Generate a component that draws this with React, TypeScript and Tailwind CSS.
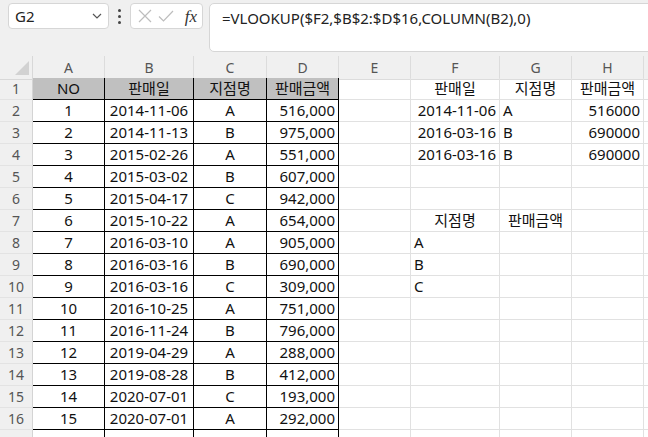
import * as React from 'react';

type Align = 'l' | 'c' | 'r';
type Cell = { v: string; a: Align };

const COLS = ['A', 'B', 'C', 'D', 'E', 'F', 'G', 'H', ''];

const tableRows: string[][] = [
  ['1', '2014-11-06', 'A', '516,000'],
  ['2', '2014-11-13', 'B', '975,000'],
  ['3', '2015-02-26', 'A', '551,000'],
  ['4', '2015-03-02', 'B', '607,000'],
  ['5', '2015-04-17', 'C', '942,000'],
  ['6', '2015-10-22', 'A', '654,000'],
  ['7', '2016-03-10', 'A', '905,000'],
  ['8', '2016-03-16', 'B', '690,000'],
  ['9', '2016-03-16', 'C', '309,000'],
  ['10', '2016-10-25', 'A', '751,000'],
  ['11', '2016-11-24', 'B', '796,000'],
  ['12', '2019-04-29', 'A', '288,000'],
  ['13', '2019-08-28', 'B', '412,000'],
  ['14', '2020-07-01', 'C', '193,000'],
  ['15', '2020-07-01', 'A', '292,000'],
];

// cells outside the bordered table, keyed "row:col"
const extra: Record<string, Cell> = {
  '1:5': { v: '판매일', a: 'c' },
  '1:6': { v: '지점명', a: 'c' },
  '1:7': { v: '판매금액', a: 'c' },
  '2:5': { v: '2014-11-06', a: 'r' },
  '2:6': { v: 'A', a: 'l' },
  '2:7': { v: '516000', a: 'r' },
  '3:5': { v: '2016-03-16', a: 'r' },
  '3:6': { v: 'B', a: 'l' },
  '3:7': { v: '690000', a: 'r' },
  '4:5': { v: '2016-03-16', a: 'r' },
  '4:6': { v: 'B', a: 'l' },
  '4:7': { v: '690000', a: 'r' },
  '7:5': { v: '지점명', a: 'c' },
  '7:6': { v: '판매금액', a: 'c' },
  '8:5': { v: 'A', a: 'l' },
  '9:5': { v: 'B', a: 'l' },
  '10:5': { v: 'C', a: 'l' },
};

const justify = (a: Align) =>
  a === 'c' ? 'justify-center' : a === 'r' ? 'justify-end' : 'justify-start';

const getCell = (r: number, c: number): { cell?: Cell; inTable: boolean; head: boolean } => {
  if (r >= 1 && r <= 16 && c <= 3) {
    if (r === 1) {
      const h = ['NO', '판매일', '지점명', '판매금액'][c];
      return { cell: { v: h, a: 'c' }, inTable: true, head: true };
    }
    const v = tableRows[r - 2][c];
    return { cell: { v, a: c === 3 ? 'r' : 'c' }, inTable: true, head: false };
  }
  return { cell: extra[`${r}:${c}`], inTable: false, head: false };
};

const Toolbar = () => (
  <div className="flex items-start h-[56px] bg-[#f0f0f0] pt-[3px] pl-[8px]">
    {/* Name box */}
    <div className="flex items-center justify-between w-[101px] h-[26px] bg-white border border-[#d6d6d6] rounded-[4px] pl-[6px] pr-[6px]">
      <span className="text-[15px] text-[#222]">G2</span>
      <svg width="10" height="6" viewBox="0 0 10 6">
        <path d="M1 1 L5 5 L9 1" fill="none" stroke="#555" strokeWidth="1.2" />
      </svg>
    </div>
    {/* vertical ellipsis */}
    <div className="flex flex-col items-center justify-center gap-[3px] w-[21px] h-[26px]">
      <span className="w-[3px] h-[3px] rounded-full bg-[#444]" />
      <span className="w-[3px] h-[3px] rounded-full bg-[#444]" />
      <span className="w-[3px] h-[3px] rounded-full bg-[#444]" />
    </div>
    {/* cancel / enter / fx */}
    <div className="flex items-center w-[73px] h-[26px] bg-white border border-[#d6d6d6] rounded-[4px] pl-[7px] pr-[5px] gap-[6px]">
      <svg width="14" height="14" viewBox="0 0 14 14">
        <path d="M1 1 L13 13 M13 1 L1 13" stroke="#bdbdbd" strokeWidth="1.2" fill="none" />
      </svg>
      <svg width="16" height="14" viewBox="0 0 16 14">
        <path d="M1 7.5 L5.5 12 L15 2" stroke="#bdbdbd" strokeWidth="1.2" fill="none" />
      </svg>
      <span className="ml-auto text-[17px] italic text-[#333] leading-none" style={{ fontFamily: '"Liberation Serif", serif' }}>
        fx
      </span>
    </div>
    {/* formula */}
    <div className="flex-1 h-[49px] ml-[6px] mr-[-12px] bg-white border border-[#d6d6d6] rounded-[5px] pl-[12px] pt-[2px]">
      <span className="text-[15px] text-[#222]">=VLOOKUP($F2,$B$2:$D$16,COLUMN(B2),0)</span>
    </div>
  </div>
);

export default function App() {
  const rows = Array.from({ length: 17 }, (_, i) => i + 1);
  return (
    <div
      className="w-[648px] h-[437px] overflow-hidden bg-white"
      style={{ fontFamily: '"Noto Sans", "Noto Sans CJK KR", sans-serif' }}
    >
      <Toolbar />
      <div className="grid grid-cols-[33px_72px_89px_73px_72px_72px_89px_72px_72px_1fr] auto-rows-[22px] leading-none">
        {/* header row */}
        <div className="relative h-[24px] bg-[#f0f0f0] border-r border-b border-[#d8d8d8]">
          <svg className="absolute right-[3px] bottom-[4px]" width="14" height="14" viewBox="0 0 14 14">
            <path d="M14 0 L14 14 L0 14 Z" fill="#d2d2d2" />
          </svg>
        </div>
        {COLS.map((c, i) => (
          <div
            key={i}
            className="flex items-center justify-center h-[24px] bg-[#f0f0f0] border-r border-b border-[#dcdcdc] text-[14px] text-[#555]"
          >
            {c}
          </div>
        ))}
        {rows.map((r) => (
          <React.Fragment key={r}>
            <div className="flex items-center justify-center bg-[#f0f0f0] border-r border-b border-[#e3e3e3] border-r-[#d4d4d4] text-[14px] text-[#555]">
              {r <= 16 ? r : ''}
            </div>
            {COLS.map((_, c) => {
              const { cell, inTable, head } = getCell(r, c);
              const below = r === 17 && c <= 3;
              return (
                <div
                  key={c}
                  className={
                    'flex items-center px-[3px] border-r border-b text-[15px] text-[#111] whitespace-nowrap overflow-hidden ' +
                    (inTable ? 'border-black ' : below ? 'border-[#e1e1e1] border-r-black ' : 'border-[#e1e1e1] ') +
                    (head ? 'bg-[#c0c0c0] ' : '') +
                    (cell ? justify(cell.a) : '')
                  }
                >
                  {cell?.v}
                </div>
              );
            })}
          </React.Fragment>
        ))}
      </div>
    </div>
  );
}
